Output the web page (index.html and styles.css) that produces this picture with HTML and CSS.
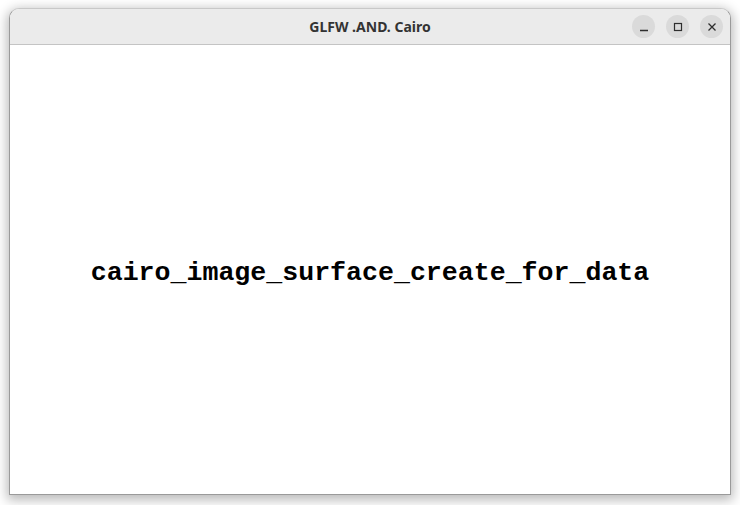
FILE: index.html
```html
<!DOCTYPE html>
<html>
<head>
<meta charset="utf-8">
<link rel="stylesheet" href="styles.css">
</head>
<body>
<div class="window">
  <div class="titlebar">
    <div class="title">GLFW .AND. Cairo</div>
    <div class="controls">
      <div class="btn"><svg width="10" height="10" viewBox="0 0 10 10"><path d="M1 8.5H9" stroke="#2e2e2e" stroke-width="1.3"/></svg></div>
      <div class="btn"><svg width="10" height="10" viewBox="0 0 10 10"><rect x="1.5" y="1.5" width="7" height="7" fill="none" stroke="#2e2e2e" stroke-width="1.2"/></svg></div>
      <div class="btn"><svg width="10" height="10" viewBox="0 0 10 10"><path d="M1.5 1.5L8.5 8.5M8.5 1.5L1.5 8.5" stroke="#2e2e2e" stroke-width="1.3"/></svg></div>
    </div>
  </div>
  <div class="content">
    <div class="label">cairo_image_surface_create_for_data</div>
  </div>
</div>
</body>
</html>
```
FILE: styles.css
```css
html, body {
  margin: 0;
  padding: 0;
  background: #ffffff;
  width: 740px;
  height: 505px;
  overflow: hidden;
}
body {
  padding: 8px 0 0 9px;
  box-sizing: border-box;
}
.window {
  width: 722px;
  height: 487px;
  box-sizing: border-box;
  border: 1px solid #9a9a9a;
  border-top-color: #c8c8c8;
  border-radius: 10px 10px 0 0;
  box-shadow: 0 3px 12px 2px rgba(0,0,0,0.28);
  display: flex;
  flex-direction: column;
  background: #ffffff;
  overflow: hidden;
}
.titlebar {
  height: 36px;
  flex: none;
  background: #ebebeb;
  border-bottom: 1px solid #c4c4c4;
  box-sizing: border-box;
  display: flex;
  align-items: center;
  justify-content: center;
  position: relative;
}
.title {
  font-family: "Noto Sans", "DejaVu Sans", sans-serif;
  font-weight: 700;
  font-size: 14px;
  color: #333333;
}
.controls {
  position: absolute;
  right: 7px;
  top: 6px;
  display: flex;
  gap: 11px;
}
.btn {
  width: 23px;
  height: 23px;
  border-radius: 50%;
  background: #dadada;
  display: flex;
  align-items: center;
  justify-content: center;
}
.content {
  flex: 1;
  display: flex;
  align-items: center;
  justify-content: center;
  padding-top: 7px;
}
.label {
  font-family: "Liberation Mono", "Courier New", monospace;
  font-weight: 700;
  font-size: 26.6px;
  color: #000000;
  white-space: nowrap;
}
```
